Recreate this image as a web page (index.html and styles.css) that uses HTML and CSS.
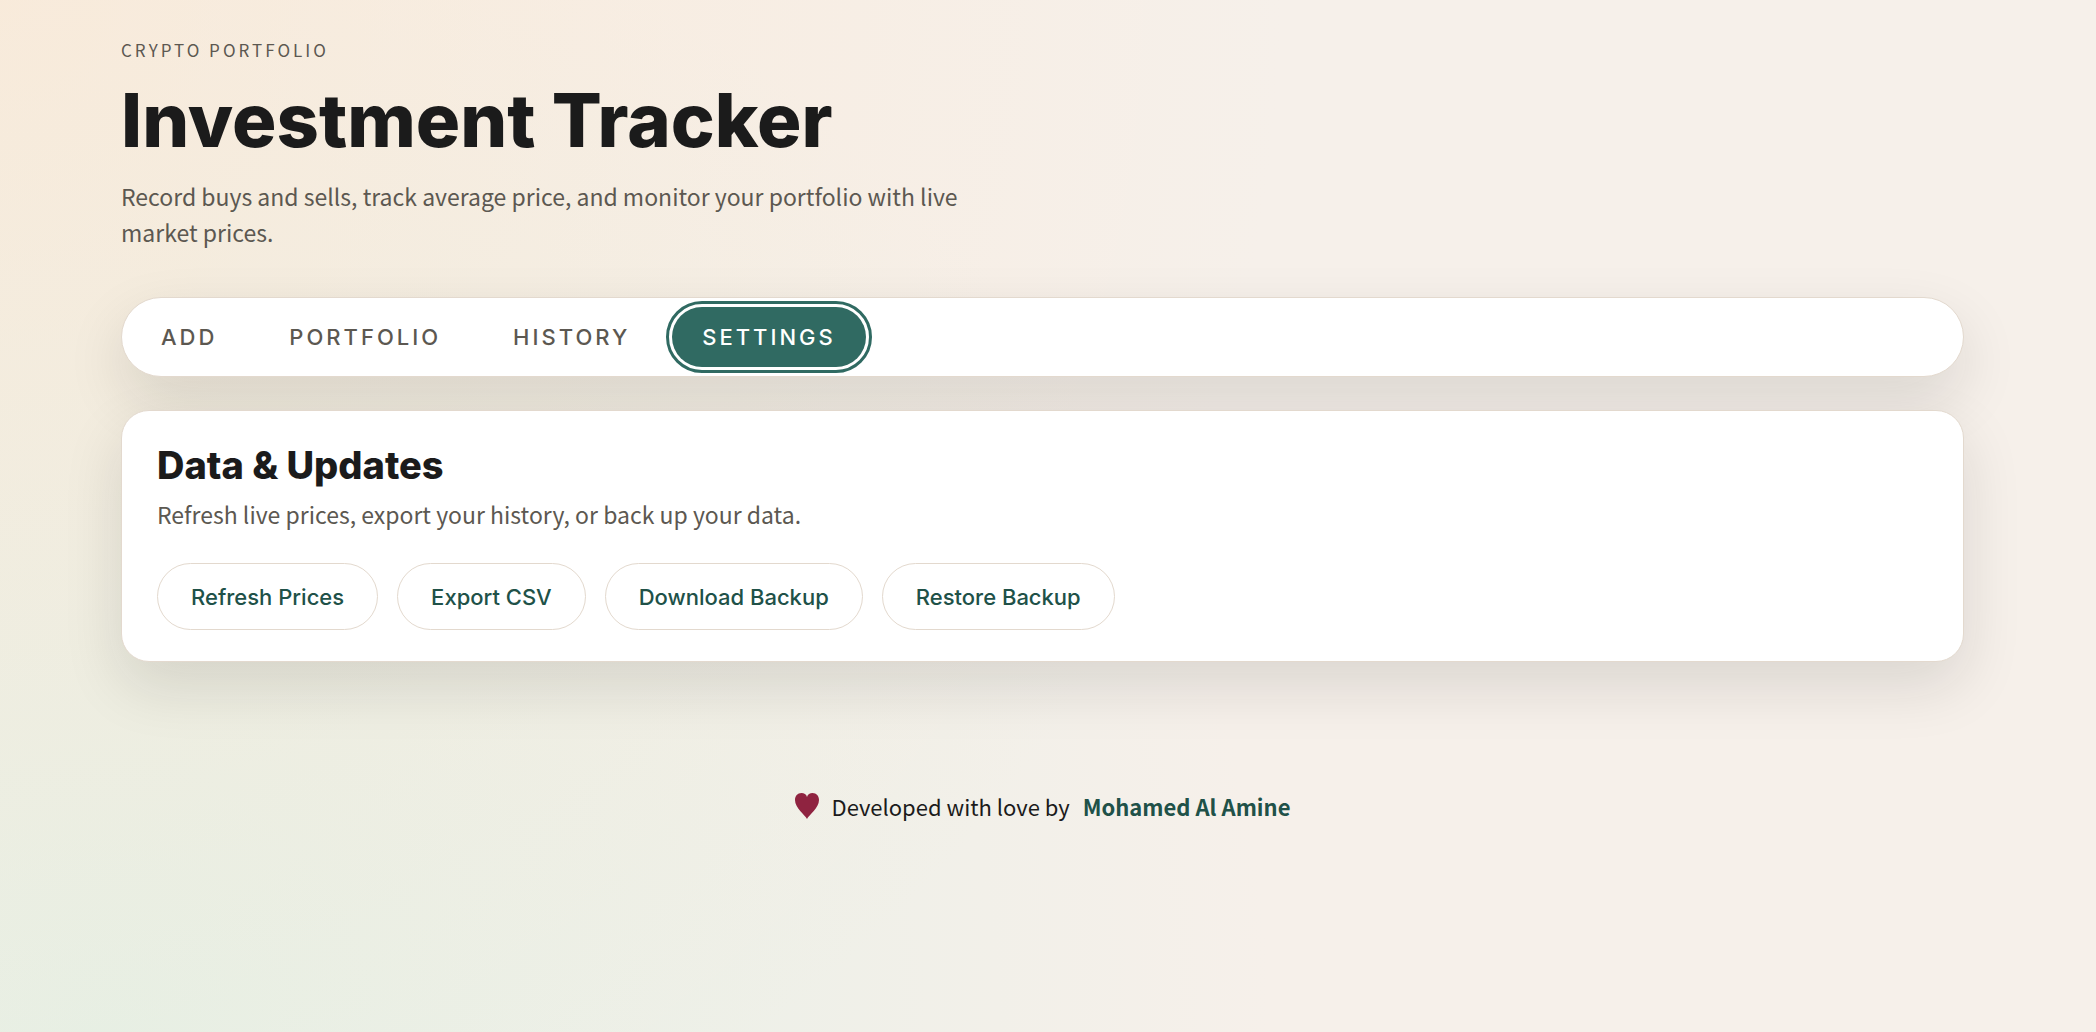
FILE: index.html
```html
<!DOCTYPE html>
<html lang="en">
<head>
<meta charset="utf-8">
<meta name="viewport" content="width=device-width, initial-scale=1">
<title>Investment Tracker</title>
<link rel="stylesheet" href="styles.css">
</head>
<body>
<div class="page">
  <header class="hero">
    <p class="eyebrow">Crypto Portfolio</p>
    <h1 class="title">Investment Tracker</h1>
    <p class="lead">Record buys and sells, track average price, and monitor your portfolio with live market prices.</p>
  </header>
  <nav class="tabs" aria-label="Sections">
    <button class="tab" type="button">Add</button>
    <button class="tab" type="button">Portfolio</button>
    <button class="tab" type="button">History</button>
    <button class="tab tab-active" type="button" aria-current="page">Settings</button>
  </nav>
  <main class="card">
    <h2 class="card-title">Data &amp; Updates</h2>
    <p class="card-text">Refresh live prices, export your history, or back up your data.</p>
    <div class="actions">
      <button class="action" type="button">Refresh Prices</button>
      <button class="action" type="button">Export CSV</button>
      <button class="action" type="button">Download Backup</button>
      <button class="action" type="button">Restore Backup</button>
    </div>
  </main>
  <footer class="footer">
    <svg class="heart" viewBox="0 0 24 26" aria-hidden="true"><path d="M12 26C10 22 0 15 0 7C0 3 2.500 0 6.500 0C9 0 11.500 1.500 12 4C12.500 1.500 15 0 17.500 0C21.500 0 24 3 24 7C24 15 14 22 12 26Z"/></svg>
    <span>Developed with love by</span>
    <a class="author" href="#">Mohamed Al Amine</a>
  </footer>
</div>
</body>
</html>
```
FILE: styles.css
```css
:root {
  --ink: #1b1b1b;
  --muted: #5c5851;
  --teal: #306a62;
  --teal-dark: #205148;
  --line: #e3d9ce;
  --shadow: 0 24px 60px rgba(27, 27, 27, 0.12);
  --display: Inter, "Liberation Sans", sans-serif;
  --text: "Noto Sans CJK SC", "Noto Sans", sans-serif;
}

* {
  box-sizing: border-box;
}

body {
  margin: 0;
  min-height: 100vh;
  color: var(--ink);
  font: 23px/36px var(--text);
  background:
    radial-gradient(circle at 0% 0%, rgba(252, 229, 204, 0.5), rgba(252, 229, 204, 0) 55%),
    radial-gradient(circle at 5% 100%, #e5f0e6, rgba(229, 240, 230, 0) 52%),
    #f6f0ea;
}

h1, h2, p {
  margin: 0;
}

.page {
  padding: 37px 132px 48px 121px;
}

.eyebrow {
  color: var(--muted);
  font-size: 17px;
  line-height: 26px;
  letter-spacing: 3px;
  text-transform: uppercase;
}

.title {
  margin-top: 17px;
  font: 800 74px/80px var(--display);
}

.lead {
  max-width: 864px;
  margin-top: 18px;
  color: var(--muted);
}

.tabs {
  display: flex;
  gap: 12px;
  margin-top: 47px;
  padding: 9px;
  border: 1px solid var(--line);
  border-radius: 40px;
  background: #fff;
  box-shadow: var(--shadow);
}

.tab {
  height: 60px;
  padding: 0 30px;
  border: 0;
  border-radius: 30px;
  background: none;
  color: var(--muted);
  font: 500 22px/28px var(--display);
  letter-spacing: 3px;
  text-transform: uppercase;
}

.tab-active {
  background: var(--teal);
  color: #fff;
  outline: 3px solid var(--teal);
  outline-offset: 3px;
}

.card {
  margin-top: 33px;
  padding: 31px 35px;
  border: 1px solid var(--line);
  border-radius: 28px;
  background: #fff;
  box-shadow: var(--shadow);
}

.card-title {
  font: 800 38px/46px var(--display);
}

.card-text {
  margin-top: 8px;
  color: var(--muted);
}

.actions {
  display: flex;
  flex-wrap: wrap;
  gap: 19px;
  margin-top: 31px;
}

.action {
  height: 67px;
  padding: 0 33px;
  border: 1px solid var(--line);
  border-radius: 34px;
  background: #fff;
  color: var(--teal-dark);
  font: 500 22px/28px var(--display);
}

.footer {
  display: flex;
  justify-content: center;
  align-items: center;
  gap: 13px;
  margin-top: 126px;
  font-size: 22px;
}

.heart {
  width: 24px;
  height: 26px;
  fill: #8f2340;
}

.author {
  color: var(--teal-dark);
  font-weight: 700;
  text-decoration: none;
}
```
